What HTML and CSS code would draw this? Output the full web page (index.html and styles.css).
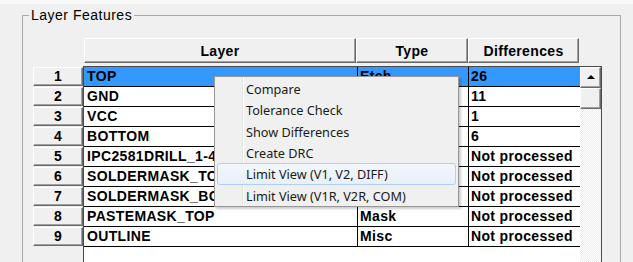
FILE: index.html
```html
<!DOCTYPE html>
<html lang="en">
<head>
    <meta charset="UTF-8">
    <title>Layer Features</title>
    <link rel="stylesheet" href="styles.css">
</head>
<body>
    <fieldset class="group">
        <legend>Layer Features</legend>

        <div class="sheet">
            <!-- column headers -->
            <div class="col-heads">
                <div class="col-head col-layer">Layer</div>
                <div class="col-head col-type">Type</div>
                <div class="col-head col-diff">Differences</div>
            </div>

            <div class="sheet-body">
                <!-- row numbers -->
                <div class="row-heads">
                    <div class="row-head">1</div>
                    <div class="row-head">2</div>
                    <div class="row-head">3</div>
                    <div class="row-head">4</div>
                    <div class="row-head">5</div>
                    <div class="row-head">6</div>
                    <div class="row-head">7</div>
                    <div class="row-head">8</div>
                    <div class="row-head">9</div>
                </div>

                <div class="grid">
                    <div class="cells">
                        <div class="row selected"><div class="cell">TOP</div><div class="cell">Etch</div><div class="cell">26</div></div>
                        <div class="row"><div class="cell">GND</div><div class="cell"></div><div class="cell">11</div></div>
                        <div class="row"><div class="cell">VCC</div><div class="cell"></div><div class="cell">1</div></div>
                        <div class="row"><div class="cell">BOTTOM</div><div class="cell"></div><div class="cell">6</div></div>
                        <div class="row"><div class="cell">IPC2581DRILL_1-4</div><div class="cell"></div><div class="cell">Not processed</div></div>
                        <div class="row"><div class="cell">SOLDERMASK_TOP</div><div class="cell"></div><div class="cell">Not processed</div></div>
                        <div class="row"><div class="cell">SOLDERMASK_BOTTOM</div><div class="cell"></div><div class="cell">Not processed</div></div>
                        <div class="row"><div class="cell">PASTEMASK_TOP</div><div class="cell">Mask</div><div class="cell">Not processed</div></div>
                        <div class="row"><div class="cell">OUTLINE</div><div class="cell">Misc</div><div class="cell">Not processed</div></div>
                    </div>

                    <!-- vertical scrollbar -->
                    <div class="vscroll">
                        <div class="scroll-btn"><span class="arrow-up"></span></div>
                        <div class="scroll-thumb"></div>
                        <div class="scroll-track"></div>
                    </div>
                </div>
            </div>
        </div>
    </fieldset>

    <!-- context menu -->
    <div class="menu">
        <div class="menu-item">Compare</div>
        <div class="menu-item">Tolerance Check</div>
        <div class="menu-item">Show Differences</div>
        <div class="menu-item">Create DRC</div>
        <div class="menu-item hover">Limit View (V1, V2, DIFF)</div>
        <div class="menu-item">Limit View (V1R, V2R, COM)</div>
    </div>
</body>
</html>
```

FILE: styles.css
```css
html {
    background: linear-gradient(#f8f8f8 0 4px, #f0f0f0 4px);
}

body {
    margin: 0;
    width: 633px;
    height: 262px;
    overflow: hidden;
    position: relative;
    font-family: "Liberation Sans", Arial, sans-serif;
    color: #000;
}

/* group box */
.group {
    box-sizing: border-box;
    margin: 7px 0 0 22px;
    padding: 0;
    width: 599px;
    height: 256px;
    min-width: 0;
    border: 1px solid #a8a8a8;
}

.group legend {
    margin-left: 6px;
    padding: 0 2px;
    font-size: 14px;
    line-height: 16px;
    letter-spacing: 0.5px;
}

.sheet {
    margin-left: 10px;
    width: 569px;
}

/* column headers */
.col-heads {
    display: flex;
    margin: 15px 0 0 51px;
    height: 25px;
}

.col-head,
.row-head,
.scroll-btn,
.scroll-thumb {
    box-sizing: border-box;
    background: #f0f0f0;
    border-top: 1px solid #fff;
    border-left: 1px solid #fff;
    border-right: 1px solid #696969;
    border-bottom: 1px solid #696969;
    box-shadow: inset -1px -1px 0 #a0a0a0;
}

.col-head {
    display: flex;
    align-items: center;
    justify-content: center;
    font-size: 14px;
    font-weight: bold;
    letter-spacing: 0.35px;
}

.col-layer { width: 272px; }
.col-type { width: 112px; }
.col-diff { width: 111px; }

.sheet-body {
    display: flex;
    margin-top: 3px;
}

/* row numbers */
.row-heads {
    width: 50px;
    padding-top: 1px;
}

.row-head {
    width: 50px;
    height: 19px;
    margin-bottom: 1px;
    font-size: 14px;
    font-weight: bold;
    line-height: 17px;
    text-align: center;
}

/* grid */
.grid {
    display: flex;
    width: 519px;
    height: 196px;
    box-sizing: border-box;
    border: 1px solid #4a4a4a;
    border-bottom: none;
}

.cells {
    width: 496px;
    background: #fff;
}

.row {
    display: grid;
    grid-template-columns: 274px 111px 111px;
    height: 20px;
}

.row.selected {
    background: #3399ff;
}

.cell {
    box-sizing: border-box;
    height: 20px;
    padding-left: 2px;
    border-bottom: 1px solid #000;
    font-size: 14px;
    font-weight: bold;
    letter-spacing: 0.35px;
    line-height: 19px;
    white-space: nowrap;
    overflow: hidden;
}

.cell:first-child {
    padding-left: 3px;
}

.cell:not(:last-child) {
    border-right: 1px solid #000;
}

/* scrollbar */
.vscroll {
    display: flex;
    flex-direction: column;
    width: 21px;
}

.scroll-btn {
    height: 21px;
    display: flex;
    align-items: center;
    justify-content: center;
}

.arrow-up {
    width: 0;
    height: 0;
    border-left: 4px solid transparent;
    border-right: 4px solid transparent;
    border-bottom: 4px solid #000;
    margin-top: -1px;
}

.scroll-thumb {
    height: 21px;
}

.scroll-track {
    flex: 1;
    background: repeating-conic-gradient(#fff 0 25%, #ececec 0 50%) 0 0 / 2px 2px;
}

/* context menu */
.menu {
    position: absolute;
    left: 214px;
    top: 76px;
    width: 245px;
    height: 131px;
    box-sizing: border-box;
    padding-top: 1px;
    border: 1px solid #979797;
    background: linear-gradient(to right, #f0f0f0 27px, #e2e3e3 27px 28px, #fff 28px 29px, #f0f0f0 29px);
    box-shadow: 2px 2px 2px rgba(0, 0, 0, 0.2);
    font-family: "Noto Sans", "Open Sans", sans-serif;
    font-size: 12.7px;
    color: #1a1a1a;
}

.menu-item {
    box-sizing: border-box;
    height: 21.33px;
    margin: 0 2px;
    padding-left: 28px;
    line-height: 20px;
    border: 1px solid transparent;
    border-radius: 3px;
    white-space: nowrap;
}

.menu-item.hover {
    border-color: #aecff7;
    background: linear-gradient(#f3f7fd, #e7eff9);
}
```
